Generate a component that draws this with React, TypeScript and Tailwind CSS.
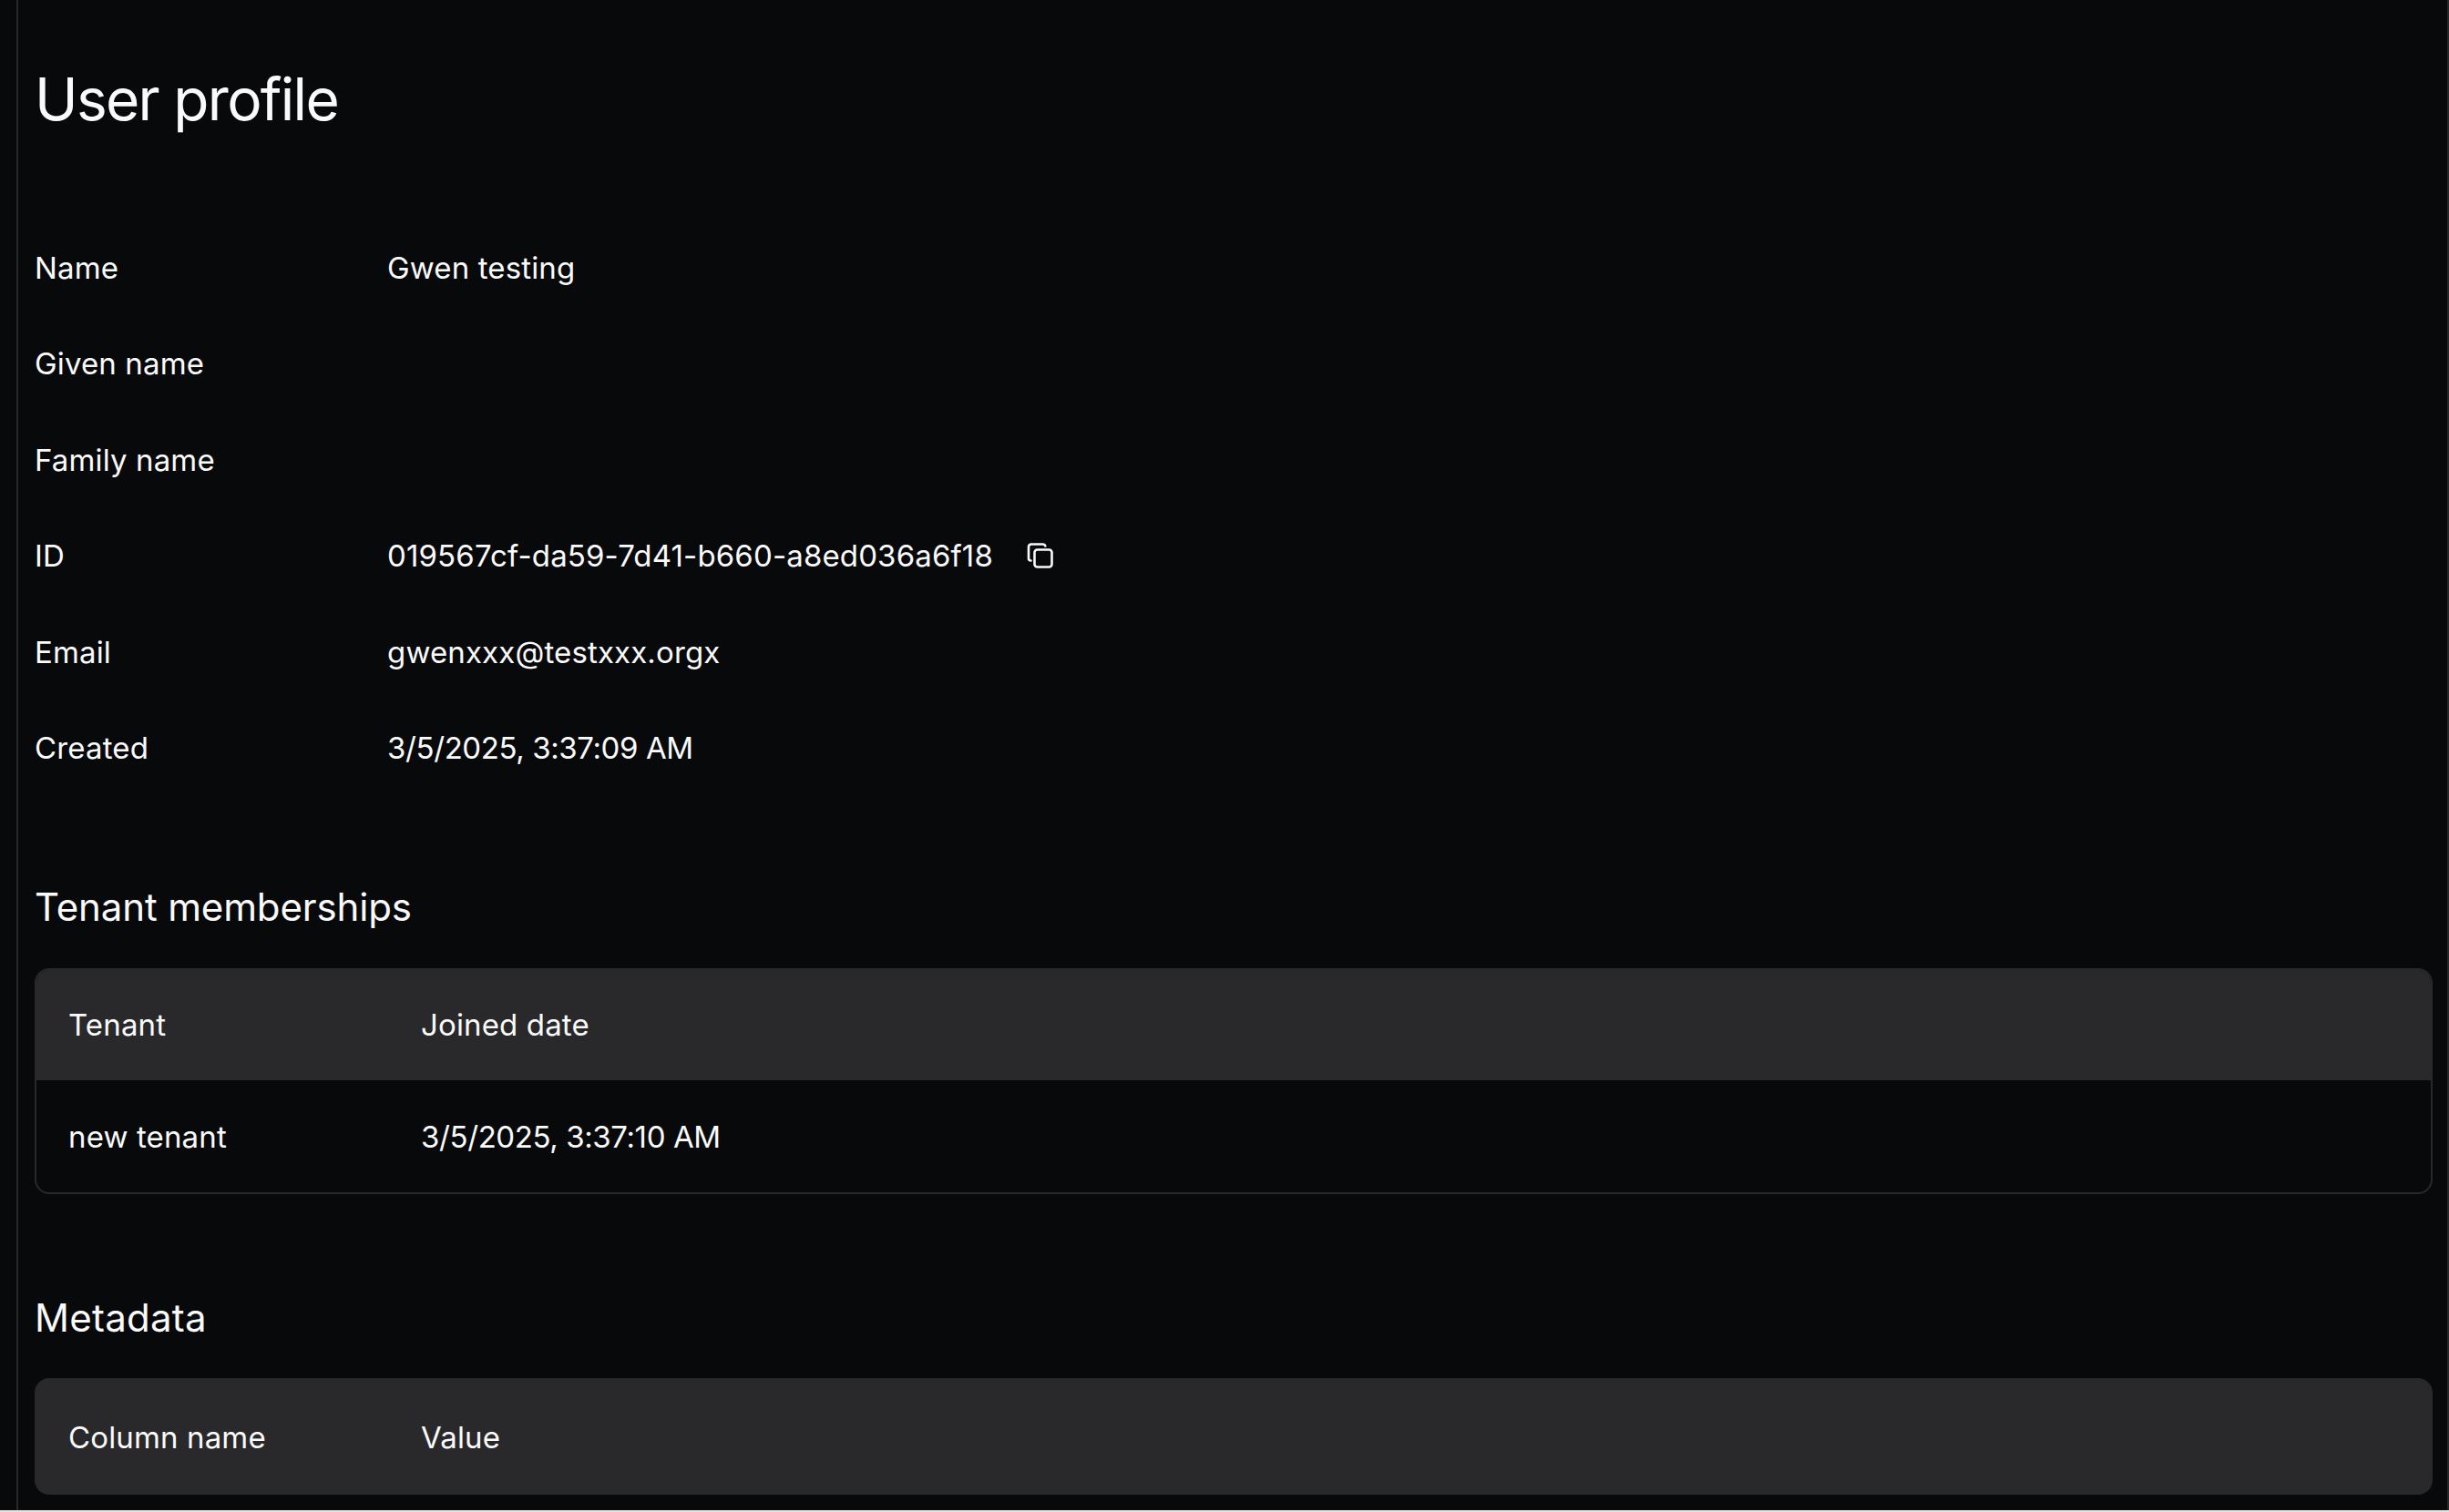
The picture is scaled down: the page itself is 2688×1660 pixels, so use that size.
import React from "react";

const rows = [
    { label: "Name", value: "Gwen testing" },
    { label: "Given name", value: "" },
    { label: "Family name", value: "" },
    { label: "ID", value: "019567cf-da59-7d41-b660-a8ed036a6f18", copy: true },
    { label: "Email", value: "gwenxxx@testxxx.orgx" },
    { label: "Created", value: "3/5/2025, 3:37:09 AM", date: true },
];

const CopyIcon = () => (
    <svg width="32" height="32" viewBox="0 0 32 32" fill="none" stroke="currentColor" strokeWidth="2.6" strokeLinecap="round" strokeLinejoin="round">
        <path d="M5.5 21.5 C3.8 21.5 3 20.6 3 19 V6.5 C3 4.6 4.2 3.5 6 3.5 H18.5 C20.2 3.5 21 4.3 21.3 5.5" />
        <rect x="9.5" y="9.5" width="19" height="19" rx="3" />
    </svg>
);

const App = () => {
    return (
        <div className="flex flex-col w-full h-[1660px] overflow-hidden bg-[#08090b] text-[#fafafa] font-['Inter',sans-serif] font-normal text-[33px] leading-[48px] tracking-[0.14px]">
            <div className="flex flex-1 min-h-0">
                <div className="w-[20px] shrink-0 border-r-2 border-[#29292b]" />
                <main className="flex-1 min-w-0 pl-[18px] pr-[16px] border-r-2 border-[#29292b]">
                    <h1 className="pt-[77px] h-[241px] text-[64px] leading-[64px] tracking-[-1.7px]">User profile</h1>

                    <div className="flex flex-col">
                        {rows.map((row) => (
                            <div key={row.label} className="flex items-center h-[105.5px]">
                                <div className="w-[387px] shrink-0">{row.label}</div>
                                <div className={row.date ? "tracking-[-0.4px]" : ""}>{row.value}</div>
                                {row.copy && (
                                    <div className="ml-[36px]">
                                        <CopyIcon />
                                    </div>
                                )}
                            </div>
                        ))}
                    </div>

                    <h2 className="mt-[94px] text-[42px] leading-[56px] tracking-[-0.13px]">Tenant memberships</h2>
                    <div className="mt-[39px] rounded-[16px] border-2 border-[#29292b] overflow-hidden">
                        <div className="flex items-center h-[121px] pb-[2px] px-[35px] bg-[#29292b]">
                            <div className="w-[387px] shrink-0">Tenant</div>
                            <div>Joined date</div>
                        </div>
                        <div className="flex items-center h-[123px] px-[35px]">
                            <div className="w-[387px] shrink-0">new tenant</div>
                            <div className="tracking-[-0.4px]">3/5/2025, 3:37:10 AM</div>
                        </div>
                    </div>

                    <h2 className="mt-[108px] text-[42px] leading-[56px] tracking-[0.26px]">Metadata</h2>
                    <div className="mt-[38px] flex items-center h-[128px] pt-[2px] px-[37px] rounded-[16px] bg-[#29292b]">
                        <div className="w-[387px] shrink-0">Column name</div>
                        <div>Value</div>
                    </div>
                </main>
            </div>
            <div className="h-[2px] shrink-0 bg-[#e4dfdf]" />
        </div>
    );
};

export default App;
